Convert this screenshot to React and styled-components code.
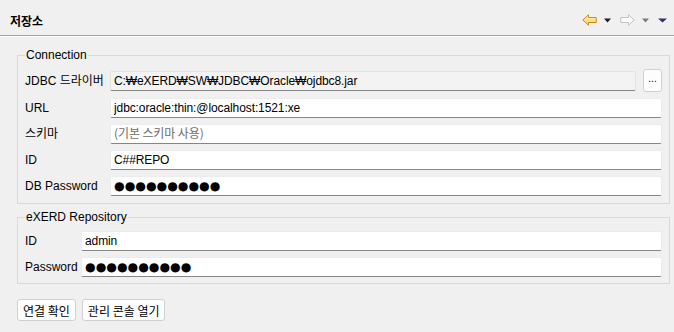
import { Fragment } from "react";
import styled, { createGlobalStyle } from "styled-components";

const GlobalStyle = createGlobalStyle`
	html, body {
		margin: 0;
		padding: 0;
		background: #f0f0f0;
	}
	body {
		font-family: "Liberation Sans", "Noto Sans CJK KR", sans-serif;
		font-size: 12px;
		color: #000;
	}
`;

const Page = styled.div`
	width: 674px;
	height: 332px;
	background: #f0f0f0;
	overflow: hidden;
`;

const Header = styled.div`
	height: 30px;
	padding: 5px 7px 0 10px;
	display: flex;
	align-items: center;
	justify-content: space-between;
	border-bottom: 1px solid #a0a0a0;
	box-shadow: 0 1px 0 #ffffff;
`;

const Title = styled.div`
	font-family: "Noto Sans CJK KR", sans-serif;
	font-weight: bold;
	font-size: 12px;
`;

const Tools = styled.div`
	display: flex;
	align-items: center;
`;

const ToolIcon = styled.span`
	display: flex;
	align-items: center;
	margin-left: ${(p) => p.$gap || 0}px;
`;

const Body = styled.div`
	padding: 11px 4px 0 17px;
	display: flex;
	flex-direction: column;
	gap: 5px;
`;

const Group = styled.fieldset`
	margin: 0;
	padding: 6px 7px ${(p) => p.$bottom}px 7px;
	border: 1px solid #d9d9d9;
	min-width: 0;
`;

const Legend = styled.legend`
	padding: 0 1px;
	line-height: 16px;
	font-size: 12px;
`;

const Rows = styled.div`
	display: grid;
	grid-template-columns: ${(p) => p.$label}px 1fr;
	row-gap: 6px;
	align-items: center;
`;

const Label = styled.div`
	white-space: nowrap;
	line-height: 16px;
`;

const FieldLine = styled.div`
	display: flex;
	align-items: center;
	gap: 7px;
`;

const Field = styled.input`
	box-sizing: border-box;
	flex: 1;
	width: 100%;
	height: 20px;
	margin: 0;
	padding: 0 3px;
	font-family: ${(p) =>
		p.$dots ? '"DejaVu Sans", sans-serif' : '"Liberation Sans", "Noto Sans CJK KR", sans-serif'};
	font-size: ${(p) => (p.$dots ? "12.2px" : "12px")};
	letter-spacing: ${(p) => (p.$dots ? "0" : "-0.1px")};
	color: #000;
	background: ${(p) => (p.$disabled ? "#f3f3f3" : "#ffffff")};
	border: 1px solid ${(p) => (p.$disabled ? "#e2e2e2" : "#ececec")};
	border-bottom: 1px solid #868686;
	border-radius: 2px;
	outline: none;

	&::placeholder {
		font-family: "Noto Sans CJK KR", sans-serif;
		color: #6d6d6d;
	}
`;

const SmallButton = styled.button`
	box-sizing: border-box;
	width: 19px;
	height: 23px;
	padding: 0 0 4px;
	font-family: "Liberation Sans", sans-serif;
	font-size: 10px;
	background: #fdfdfd;
	border: 1px solid #d0d0d0;
	border-radius: 3px;
	color: #000;
`;

const Actions = styled.div`
	display: flex;
	gap: 6px;
	margin-top: 10px;
`;

const Button = styled.button`
	box-sizing: border-box;
	height: 22px;
	padding: 0 5px;
	font-family: "Noto Sans CJK KR", sans-serif;
	font-size: 12px;
	background: #fdfdfd;
	border: 1px solid #d0d0d0;
	border-radius: 3px;
	color: #000;
`;

const BackArrow = () => (
	<svg width="15" height="12" viewBox="0 0 15 12">
		<defs>
			<linearGradient id="back" x1="0" y1="0" x2="0" y2="1">
				<stop offset="0" stopColor="#fff6c8" />
				<stop offset="1" stopColor="#f7cd5a" />
			</linearGradient>
		</defs>
		<path
			d="M0.8 6 L6.5 0.8 L6.5 3.5 L14.2 3.5 L14.2 8.5 L6.5 8.5 L6.5 11.2 Z"
			fill="url(#back)"
			stroke="#d08a16"
			strokeWidth="1"
			strokeLinejoin="round"
		/>
	</svg>
);

const ForwardArrow = () => (
	<svg width="15" height="12" viewBox="0 0 15 12">
		<path
			d="M14.2 6 L8.5 0.8 L8.5 3.5 L0.8 3.5 L0.8 8.5 L8.5 8.5 L8.5 11.2 Z"
			fill="#fafafa"
			stroke="#c2c2c2"
			strokeWidth="1"
			strokeLinejoin="round"
		/>
	</svg>
);

const Caret = ({ color, width = 7 }) => (
	<svg width={width} height="5" viewBox={`0 0 ${width} 5`}>
		<path d={`M0 0.5 L${width} 0.5 L${width / 2} 4.5 Z`} fill={color} />
	</svg>
);

const connectionRows = [
	{ label: "URL", value: "jdbc:oracle:thin:@localhost:1521:xe" },
	{ label: "스키마", value: "", placeholder: "(기본 스키마 사용)" },
	{ label: "ID", value: "C##REPO" },
	{ label: "DB Password", value: "●●●●●●●●●●", dots: true },
];

const repositoryRows = [
	{ label: "ID", value: "admin" },
	{ label: "Password", value: "●●●●●●●●●●", dots: true },
];

const App = () => {
	return (
		<Page>
			<GlobalStyle />
			<Header>
				<Title>저장소</Title>
				<Tools>
					<ToolIcon>
						<BackArrow />
					</ToolIcon>
					<ToolIcon $gap={7}>
						<Caret color="#1e1e1e" />
					</ToolIcon>
					<ToolIcon $gap={9}>
						<ForwardArrow />
					</ToolIcon>
					<ToolIcon $gap={7}>
						<Caret color="#7a7a7a" />
					</ToolIcon>
					<ToolIcon $gap={9}>
						<Caret color="#3a2c6a" width={9} />
					</ToolIcon>
				</Tools>
			</Header>

			<Body>
				<Group $bottom={7}>
					<Legend>Connection</Legend>
					<Rows $label={85}>
						<Label>JDBC 드라이버</Label>
						<FieldLine>
							<Field
								readOnly
								$disabled
								defaultValue="C:₩eXERD₩SW₩JDBC₩Oracle₩ojdbc8.jar"
							/>
							<SmallButton>...</SmallButton>
						</FieldLine>
						{connectionRows.map((row) => (
							<Fragment key={row.label}>
								<Label>{row.label}</Label>
								<Field
									readOnly
									$dots={row.dots}
									defaultValue={row.value}
									placeholder={row.placeholder}
								/>
							</Fragment>
						))}
					</Rows>
				</Group>

				<Group $bottom={6}>
					<Legend>eXERD Repository</Legend>
					<Rows $label={56}>
						{repositoryRows.map((row) => (
							<Fragment key={row.label}>
								<Label>{row.label}</Label>
								<Field readOnly $dots={row.dots} defaultValue={row.value} />
							</Fragment>
						))}
					</Rows>
				</Group>

				<Actions>
					<Button>연결 확인</Button>
					<Button>관리 콘솔 열기</Button>
				</Actions>
			</Body>
		</Page>
	);
};

export default App;
